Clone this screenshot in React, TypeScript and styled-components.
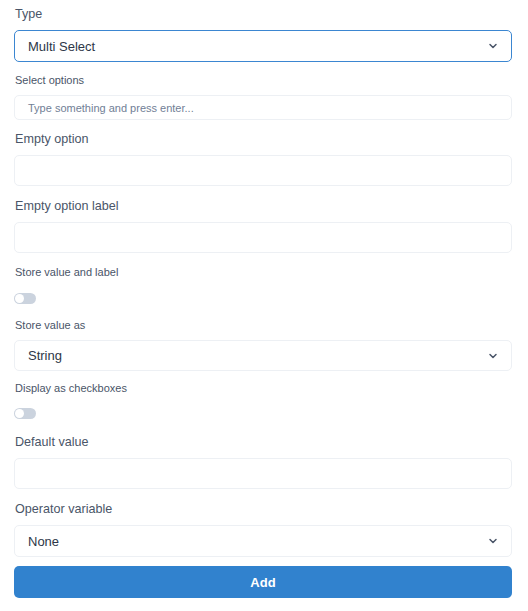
import React from "react";
import styled, { createGlobalStyle } from "styled-components";

const Global = createGlobalStyle`
  html, body { margin: 0; padding: 0; background: #ffffff; }
  body { font-family: "Liberation Sans", Arial, sans-serif; }
  * { box-sizing: border-box; }
`;

const Form = styled.form`
  width: 528px;
  padding: 6px 16px 0 14px;
  display: flex;
  flex-direction: column;
`;

const Field = styled.div<{ $mt?: number }>`
  display: flex;
  flex-direction: column;
  margin-top: ${(p) => p.$mt ?? 0}px;
`;

const Label = styled.label<{ $small?: boolean; $mb?: number }>`
  font-size: ${(p) => (p.$small ? 11 : 12.6)}px;
  line-height: ${(p) => (p.$small ? 14 : 16)}px;
  color: #4a5568;
  padding-left: 1px;
  margin-bottom: ${(p) => p.$mb ?? 8}px;
`;

const InputBox = styled.div<{ $h?: number; $focus?: boolean }>`
  height: ${(p) => p.$h ?? 31}px;
  border: ${(p) => (p.$focus ? "1.5px solid #3b86d1" : "1px solid #edf0f4")};
  border-radius: 5px;
  background: #fff;
  display: flex;
  align-items: center;
  padding: 0 12px 0 13px;
  font-size: 13px;
  color: #2d3748;
`;

const Placeholder = styled.span`
  font-size: 11px;
  color: #718096;
`;

const SelectText = styled.span`
  flex: 1;
`;

const Chevron = styled.svg`
  width: 10px;
  height: 10px;
  color: #4a5568;
  margin-right: 1px;
`;

const Toggle = styled.div`
  width: 22px;
  height: 11px;
  border-radius: 6px;
  background: #cbd3de;
  padding: 1px;
  display: flex;
  align-items: center;
`;

const Knob = styled.div`
  width: 9px;
  height: 9px;
  border-radius: 50%;
  background: #ffffff;
`;

const Button = styled.button`
  margin-top: 9px;
  height: 32px;
  width: 100%;
  border: none;
  border-radius: 5px;
  background: #3182ce;
  color: #ffffff;
  font-family: "Liberation Sans", Arial, sans-serif;
  font-weight: bold;
  font-size: 13px;
  cursor: pointer;
`;

const ChevronIcon = () => (
  <Chevron viewBox="0 0 10 10" fill="none">
    <path d="M2 3.5 L5 6.5 L8 3.5" stroke="currentColor" strokeWidth="1.5" strokeLinecap="round" strokeLinejoin="round" />
  </Chevron>
);

const Select = ({ value, focus, h = 32 }: { value: string; focus?: boolean; h?: number }) => (
  <InputBox $h={h} $focus={focus}>
    <SelectText>{value}</SelectText>
    <ChevronIcon />
  </InputBox>
);

export default function App() {
  return (
    <>
      <Global />
      <Form onSubmit={(e) => e.preventDefault()}>
        <Field>
          <Label>Type</Label>
          <Select value="Multi Select" focus />
        </Field>
        <Field $mt={11}>
          <Label $small>Select options</Label>
          <InputBox $h={25}>
            <Placeholder>Type something and press enter...</Placeholder>
          </InputBox>
        </Field>
        <Field $mt={11}>
          <Label>Empty option</Label>
          <InputBox />
        </Field>
        <Field $mt={12}>
          <Label>Empty option label</Label>
          <InputBox />
        </Field>
        <Field $mt={12}>
          <Label $small $mb={14}>Store value and label</Label>
          <Toggle><Knob /></Toggle>
        </Field>
        <Field $mt={14}>
          <Label $small>Store value as</Label>
          <Select value="String" h={31} />
        </Field>
        <Field $mt={10}>
          <Label $small $mb={13}>Display as checkboxes</Label>
          <Toggle><Knob /></Toggle>
        </Field>
        <Field $mt={15}>
          <Label>Default value</Label>
          <InputBox />
        </Field>
        <Field $mt={12}>
          <Label>Operator variable</Label>
          <Select value="None" />
        </Field>
        <Button type="submit">Add</Button>
      </Form>
    </>
  );
}
